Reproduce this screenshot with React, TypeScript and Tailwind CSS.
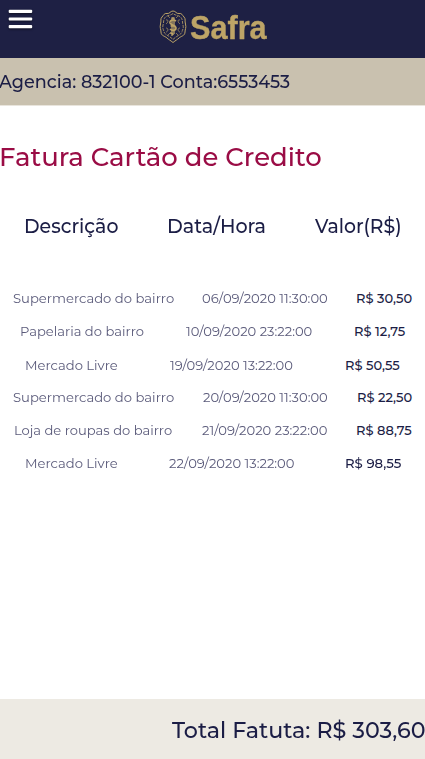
import { useLayoutEffect, useRef, useState } from "react";

// Stretches a single line of text to the width of its box.
function FitText({ text, className }: { text: string; className: string }) {
  const box = useRef<HTMLSpanElement>(null);
  const line = useRef<HTMLSpanElement>(null);
  const [scale, setScale] = useState(1);
  useLayoutEffect(() => {
    if (box.current && line.current) {
      setScale(box.current.clientWidth / line.current.offsetWidth);
    }
  }, [text]);
  return (
    <span ref={box} className={`block shrink-0 whitespace-nowrap ${className}`}>
      <span ref={line} className="inline-block origin-left" style={{ transform: `scaleX(${scale})` }}>
        {text}
      </span>
    </span>
  );
}

const rows = [
  { name: "Supermercado do bairro", date: "06/09/2020 11:30:00", value: "R$ 30,50", h: "h-[33px]", n: "ml-[13px] w-[161px]", d: "ml-[28px] w-[126px]", v: "ml-[28px] w-[56px]" },
  { name: "Papelaria do bairro", date: "10/09/2020 23:22:00", value: "R$ 12,75", h: "h-[34px]", n: "ml-[20px] w-[124px]", d: "ml-[42px] w-[126px]", v: "ml-[42px] w-[51px]" },
  { name: "Mercado Livre", date: "19/09/2020 13:22:00", value: "R$ 50,55", h: "h-[32px]", n: "ml-[25px] w-[93px]", d: "ml-[52px] w-[123px]", v: "ml-[52px] w-[55px]" },
  { name: "Supermercado do bairro", date: "20/09/2020 11:30:00", value: "R$ 22,50", h: "h-[33px]", n: "ml-[13px] w-[161px]", d: "ml-[29px] w-[125px]", v: "ml-[29px] w-[55px]" },
  { name: "Loja de roupas do bairro", date: "21/09/2020 23:22:00", value: "R$ 88,75", h: "h-[33px]", n: "ml-[14px] w-[158px]", d: "ml-[30px] w-[125px]", v: "ml-[29px] w-[56px]" },
  { name: "Mercado Livre", date: "22/09/2020 13:22:00", value: "R$ 98,55", h: "h-[33px]", n: "ml-[25px] w-[93px]", d: "ml-[51px] w-[125px]", v: "ml-[51px] w-[56px]" },
];

function Crest() {
  return (
    <svg className="mt-[9.500px] h-[34px] w-[28px] shrink-0" viewBox="0 0 28 34" fill="none" stroke="#bda467">
      <path d="M14 1C11 1 11 4 8 3.500C5 3 5 5 3 7C1 9 2.500 11 1.500 14C.5 18 2 19 2 22C2 26 6 26 8 28C10 30 11 30 14 32.500C17 30 18 30 20 28C22 26 26 26 26 22C26 19 27.500 18 26.500 14C25.500 11 27 9 25 7C23 5 23 3 20 3.500C17 4 17 1 14 1Z" strokeWidth="1" />
      <path d="M14 3.500C11 6 8 5 6 7.500C4 10 5 12 4 15C3 19 5 20 5 22C6 25 11 26 14 29.500C17 26 22 25 23 22C23 20 25 19 24 15C23 12 24 10 22 7.500C20 5 17 6 14 3.500Z" strokeWidth="1" strokeDasharray="3 1" opacity=".8" />
      <path d="M7 10c3-1 2 3 0 4m0 4c3 0 2 4 0 4M21 10c-3-1-2 3 0 4m0 4c-3 0-2 4 0 4M9 6l2 2M19 6l-2 2M9 25l2-2M19 25l-2-2" strokeWidth=".8" opacity=".8" />
      <path d="M13 8V26M15 8V24M12.500 8h3" strokeWidth="1.300" />
      <path d="M17 11C14 9 10.500 10.500 11 13C11.500 15 17 15 17 18C17 21 13 21 11 19M11 23c1 0 3 0 3 2M11.500 16h5" strokeWidth="1.600" />
    </svg>
  );
}

export default function App() {
  return (
    <div className="flex h-[759px] w-[425px] flex-col overflow-hidden bg-white font-['Montserrat','Inter',sans-serif] text-[#1b1d45]">
      <header className="flex h-[58px] shrink-0 items-start bg-[#1e2044]">
        <svg className="mt-[6px] ml-[6px] h-[26px] w-[29px] shrink-0 drop-shadow-[0_1px_1px_rgba(0,0,0,0.5)]" viewBox="0 0 29 26" fill="#fff">
          <rect x="2.700" y="3.800" width="23.500" height="3.200" rx="1" />
          <rect x="2.700" y="11.400" width="23.500" height="3.200" rx="1" />
          <rect x="2.700" y="19" width="23.500" height="3.200" rx="1" />
        </svg>
        <div className="ml-[124px] flex">
          <Crest />
          <FitText text="Safra" className="mt-[9px] ml-[3px] w-[77px] font-['Liberation_Sans',sans-serif] text-[33px] leading-[37px] font-bold text-[#bda467] [-webkit-text-stroke:0.4px_#bda467]" />
        </div>
      </header>
      <div className="flex h-[48px] shrink-0 items-center border-b border-[#e9e5dd] bg-[#c9c1af]">
        <FitText text="Agencia: 832100-1 Conta:6553453" className="-ml-px w-[291px] text-[18px] leading-6 font-medium" />
      </div>
      <main className="flex grow flex-col">
        <h1 className="mt-[33px] flex h-9 items-center text-[#9a0c45]">
          <FitText text="Fatura Cartão de Credito" className="-ml-px w-[323px] text-[26.500px] leading-9 font-medium" />
        </h1>
        <div className="mt-[38px] flex h-[27px] items-center text-[19.500px] leading-[27px] font-medium">
          <FitText text="Descrição" className="ml-[24px] w-[94px]" />
          <FitText text="Data/Hora" className="ml-[49px] w-[99px]" />
          <FitText text="Valor(R$)" className="ml-[49px] w-[87px]" />
        </div>
        <div className="mt-[42px] flex flex-col text-[13px] leading-[33px]">
          {rows.map((r, i) => (
            <div key={i} className={`flex items-start ${r.h}`}>
              <FitText text={r.name} className={`text-[#5a5a7a] ${r.n}`} />
              <FitText text={r.date} className={`text-[#5a5a7a] ${r.d}`} />
              <FitText text={r.value} className={`font-medium ${r.v}`} />
            </div>
          ))}
        </div>
      </main>
      <footer className="flex h-[60px] shrink-0 items-center bg-[#edeae3]">
        <FitText text="Total Fatuta: R$ 303,60" className="mt-px ml-[172px] w-[254px] text-[23px] leading-8 font-medium" />
      </footer>
    </div>
  );
}
